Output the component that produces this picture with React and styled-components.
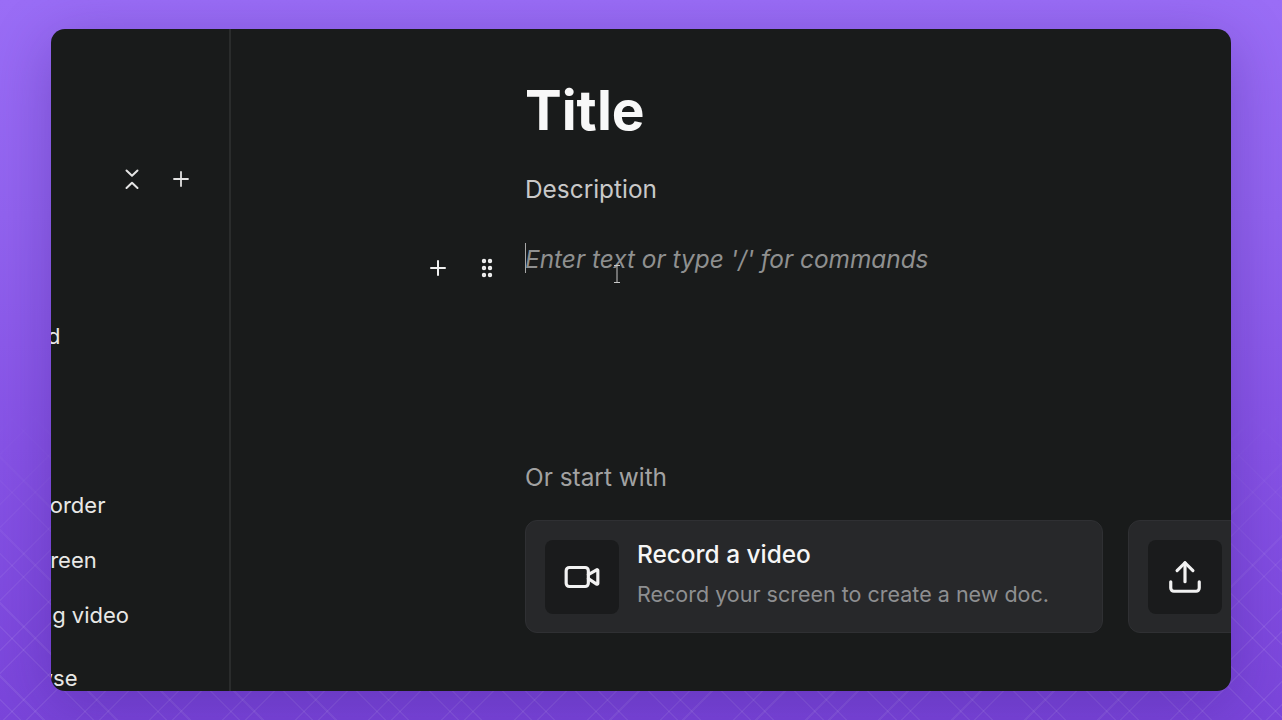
import React from "react";
import styled, { createGlobalStyle } from "styled-components";
import { Plus, Upload, Video, GripVertical } from "lucide-react";

const Global = createGlobalStyle`
  html, body { margin: 0; padding: 0; height: 100%; }
  body { font-family: Inter, "Noto Sans", sans-serif; background: #8a5ae6; }
`;

const Page = styled.div`
  position: relative;
  width: 1282px;
  height: 720px;
  box-sizing: border-box;
  padding: 29px 51px;
  overflow: hidden;
  background: linear-gradient(180deg, #9a6df6 0%, #9263ef 30%, #8753e6 62%, #7a45da 100%);
  &::before {
    content: "";
    position: absolute;
    inset: 0;
    filter: blur(.4px);
    background-image:
      repeating-linear-gradient(45deg,
        transparent 0 14px, rgba(255,255,255,.07) 14px 15.5px,
        transparent 15.5px 30.4px, rgba(255,255,255,.07) 30.4px 31.9px,
        transparent 31.9px 51.6px),
      repeating-linear-gradient(-45deg,
        transparent 0 10px, rgba(255,255,255,.07) 10px 11.5px,
        transparent 11.5px 26.2px, rgba(255,255,255,.07) 26.2px 27.7px,
        transparent 27.7px 51.6px);
    -webkit-mask-image: linear-gradient(180deg, transparent 55%, #000 88%);
    mask-image: linear-gradient(180deg, transparent 55%, #000 88%);
  }
`;

const Window = styled.div`
  position: relative;
  display: flex;
  height: 662px;
  border-radius: 14px;
  overflow: hidden;
  background: #191b1b;
  box-shadow: 0 12px 60px rgba(50, 20, 120, .32);
`;

const Sidebar = styled.aside`
  flex: 0 0 178px;
  border-right: 2px solid #2a2c2c;
  overflow: hidden;
  padding-top: 138px;
`;

const SideTools = styled.div`
  display: flex;
  align-items: center;
  gap: 29px;
  padding-left: 73px;
  height: 24px;
  color: #e4e4e4;
`;

const ChevronPair = styled.svg`
  display: block;
  width: 16px;
  height: 24px;
`;

const SideItem = styled.div`
  font-size: 22px;
  line-height: 26px;
  color: #e8e8e6;
  white-space: nowrap;
  margin-left: ${p => p.$shift}px;
  margin-top: ${p => p.$top}px;
`;

const Main = styled.main`
  flex: 1;
  min-width: 0;
  padding: 46px 0 0 294px;
  overflow: hidden;
`;

const Title = styled.h1`
  margin: 0;
  font-size: 55px;
  line-height: 70px;
  font-weight: 650;
  color: #f8f8f8;
`;

const Description = styled.p`
  margin: 28px 0 0;
  font-size: 24.4px;
  line-height: 32px;
  color: #c9c9c9;
`;

const EditorLine = styled.div`
  position: relative;
  margin-top: 38px;
  height: 32px;
  font-size: 24.4px;
  line-height: 32px;
  font-style: italic;
  color: #8f9090;
`;

const Caret = styled.span`
  position: absolute;
  left: 0;
  top: 0;
  width: 1px;
  height: 30px;
  background: #a8a8a8;
`;

const BlockTools = styled.div`
  position: absolute;
  left: -99px;
  top: 13px;
  display: flex;
  align-items: center;
  gap: 25px;
  color: #f0f0f0;
`;

const Pointer = styled.svg`
  position: absolute;
  left: 87px;
  top: 22px;
`;

const Lead = styled.h2`
  margin: 186px 0 0;
  font-size: 24.4px;
  line-height: 32px;
  font-weight: 400;
  color: #a2a2a2;
`;

const Cards = styled.div`
  display: flex;
  gap: 25px;
  margin-top: 27px;
`;

const Card = styled.div`
  flex: 0 0 578px;
  box-sizing: border-box;
  height: 113px;
  display: flex;
  align-items: center;
  gap: 18px;
  padding-left: 19px;
  background: #27282a;
  border: 1px solid #2f3033;
  border-radius: 12px;
`;

const IconBox = styled.div`
  flex: 0 0 74px;
  height: 74px;
  display: flex;
  align-items: center;
  justify-content: center;
  border-radius: 8px;
  background: #1a1b1c;
  color: #f2f2f2;
`;

const CardCopy = styled.div`
  margin-top: -5px;
`;

const CardTitle = styled.div`
  font-size: 24.4px;
  line-height: 30px;
  font-weight: 550;
  color: #f6f6f6;
`;

const CardText = styled.div`
  margin-top: 10px;
  font-size: 21.5px;
  line-height: 30px;
  color: #8e8f91;
`;

const items = [
  { text: "Upload", shift: -65, top: 132 },
  { text: "Screen recorder", shift: -114, top: 143 },
  { text: "Record screen", shift: -105, top: 29 },
  { text: "Recording video", shift: -91, top: 29 },
  { text: "Browse", shift: -51, top: 37 },
];

export default function App() {
  return (
    <Page>
      <Global />
      <Window>
        <Sidebar>
          <SideTools>
            <ChevronPair viewBox="0 0 16 24" fill="none" stroke="currentColor" strokeWidth="2" strokeLinecap="round" strokeLinejoin="round">
              <path d="M2.5 3.5 8 8.8l5.5-5.3M2.5 21 8 15.7l5.5 5.3" />
            </ChevronPair>
            <Plus size={24} strokeWidth={1.8} />
          </SideTools>
          {items.map(i => (
            <SideItem key={i.text} $shift={i.shift} $top={i.top}>{i.text}</SideItem>
          ))}
        </Sidebar>
        <Main>
          <Title>Title</Title>
          <Description>Description</Description>
          <EditorLine>
            <BlockTools>
              <Plus size={24} strokeWidth={2} />
              <GripVertical size={24} strokeWidth={2.4} />
            </BlockTools>
            <Caret />
            Enter text or type '/' for commands
            <Pointer width="10" height="18" viewBox="0 0 10 18" fill="none" stroke="#c8c8c8" strokeWidth="1">
              <path d="M2 .5h6M5 .5v17M2 17.5h6" />
            </Pointer>
          </EditorLine>
          <Lead>Or start with</Lead>
          <Cards>
            <Card>
              <IconBox><Video size={38} strokeWidth={2} /></IconBox>
              <CardCopy>
                <CardTitle>Record a video</CardTitle>
                <CardText>Record your screen to create a new doc.</CardText>
              </CardCopy>
            </Card>
            <Card>
              <IconBox><Upload size={38} strokeWidth={2} /></IconBox>
            </Card>
          </Cards>
        </Main>
      </Window>
    </Page>
  );
}
